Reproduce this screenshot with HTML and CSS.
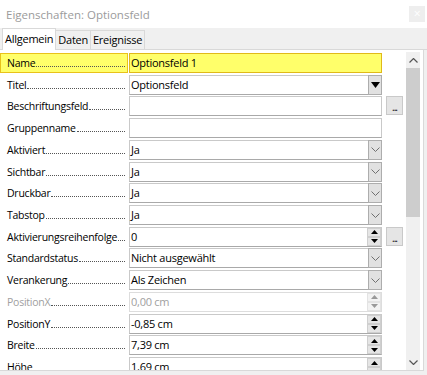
FILE: index.html
```html
<!DOCTYPE html>
<html lang="de">
<head>
<meta charset="utf-8">
<link rel="stylesheet" href="styles.css">
</head>
<body>
<div class="window">
  <div class="titlebar">
    <span class="title">Eigenschaften: Optionsfeld</span>
    <span class="close">×</span>
  </div>
  <div class="tabs">
    <div class="tab active">Allgemein</div>
    <div class="tab">Daten</div>
    <div class="tab">Ereignisse</div>
  </div>
  <div class="panel">
    <div class="rows">
      <div class="row">
        <div class="label hl"><span>Name</span><i class="dots"></i></div>
        <div class="field yellow"><span class="val">Optionsfeld 1</span></div>
      </div>
      <div class="row">
        <div class="label"><span>Titel</span><i class="dots"></i></div>
        <div class="field"><span class="val">Optionsfeld</span><span class="btn list"><svg width="9" height="6" viewBox="0 0 9 6"><path d="M0 0H9L4.5 6Z" fill="#000"/></svg></span></div>
      </div>
      <div class="row">
        <div class="label"><span>Beschriftungsfeld</span><i class="dots"></i></div>
        <div class="field"><span class="val"></span></div>
        <div class="more">...</div>
      </div>
      <div class="row">
        <div class="label"><span>Gruppenname</span><i class="dots"></i></div>
        <div class="field"><span class="val"></span></div>
      </div>
      <div class="row">
        <div class="label"><span>Aktiviert</span><i class="dots"></i></div>
        <div class="field"><span class="val">Ja</span><span class="btn"><svg width="9" height="5" viewBox="0 0 9 5"><path d="M0.5 0.5L4.5 4.5L8.5 0.5" fill="none" stroke="#707070"/></svg></span></div>
      </div>
      <div class="row">
        <div class="label"><span>Sichtbar</span><i class="dots"></i></div>
        <div class="field"><span class="val">Ja</span><span class="btn"><svg width="9" height="5" viewBox="0 0 9 5"><path d="M0.5 0.5L4.5 4.5L8.5 0.5" fill="none" stroke="#707070"/></svg></span></div>
      </div>
      <div class="row">
        <div class="label"><span>Druckbar</span><i class="dots"></i></div>
        <div class="field"><span class="val">Ja</span><span class="btn"><svg width="9" height="5" viewBox="0 0 9 5"><path d="M0.5 0.5L4.5 4.5L8.5 0.5" fill="none" stroke="#707070"/></svg></span></div>
      </div>
      <div class="row">
        <div class="label"><span>Tabstop</span><i class="dots"></i></div>
        <div class="field"><span class="val">Ja</span><span class="btn"><svg width="9" height="5" viewBox="0 0 9 5"><path d="M0.5 0.5L4.5 4.5L8.5 0.5" fill="none" stroke="#707070"/></svg></span></div>
      </div>
      <div class="row">
        <div class="label"><span>Aktivierungsreihenfolge</span><i class="dots"></i></div>
        <div class="field"><span class="val">0</span><span class="spin"><span class="up"><svg width="7" height="4" viewBox="0 0 7 4"><path d="M0 4H7L3.5 0Z" fill="#000"/></svg></span><span class="dn"><svg width="7" height="4" viewBox="0 0 7 4"><path d="M0 0H7L3.5 4Z" fill="#000"/></svg></span></span></div>
        <div class="more">...</div>
      </div>
      <div class="row">
        <div class="label"><span>Standardstatus</span><i class="dots"></i></div>
        <div class="field"><span class="val">Nicht ausgewählt</span><span class="btn"><svg width="9" height="5" viewBox="0 0 9 5"><path d="M0.5 0.5L4.5 4.5L8.5 0.5" fill="none" stroke="#707070"/></svg></span></div>
      </div>
      <div class="row">
        <div class="label"><span>Verankerung</span><i class="dots"></i></div>
        <div class="field"><span class="val">Als Zeichen</span><span class="btn"><svg width="9" height="5" viewBox="0 0 9 5"><path d="M0.5 0.5L4.5 4.5L8.5 0.5" fill="none" stroke="#707070"/></svg></span></div>
      </div>
      <div class="row disabled">
        <div class="label"><span>PositionX</span><i class="dots"></i></div>
        <div class="field"><span class="val">0,00 cm</span><span class="spin"><span class="up"><svg width="7" height="4" viewBox="0 0 7 4"><path d="M0 4H7L3.5 0Z" fill="#999"/></svg></span><span class="dn"><svg width="7" height="4" viewBox="0 0 7 4"><path d="M0 0H7L3.5 4Z" fill="#999"/></svg></span></span></div>
      </div>
      <div class="row">
        <div class="label"><span>PositionY</span><i class="dots"></i></div>
        <div class="field"><span class="val">-0,85 cm</span><span class="spin"><span class="up"><svg width="7" height="4" viewBox="0 0 7 4"><path d="M0 4H7L3.5 0Z" fill="#000"/></svg></span><span class="dn"><svg width="7" height="4" viewBox="0 0 7 4"><path d="M0 0H7L3.5 4Z" fill="#000"/></svg></span></span></div>
      </div>
      <div class="row">
        <div class="label"><span>Breite</span><i class="dots"></i></div>
        <div class="field"><span class="val">7,39 cm</span><span class="spin"><span class="up"><svg width="7" height="4" viewBox="0 0 7 4"><path d="M0 4H7L3.5 0Z" fill="#000"/></svg></span><span class="dn"><svg width="7" height="4" viewBox="0 0 7 4"><path d="M0 0H7L3.5 4Z" fill="#000"/></svg></span></span></div>
      </div>
      <div class="row">
        <div class="label"><span>Höhe</span><i class="dots"></i></div>
        <div class="field"><span class="val">1,69 cm</span><span class="spin"><span class="up"><svg width="7" height="4" viewBox="0 0 7 4"><path d="M0 4H7L3.5 0Z" fill="#000"/></svg></span><span class="dn"><svg width="7" height="4" viewBox="0 0 7 4"><path d="M0 0H7L3.5 4Z" fill="#000"/></svg></span></span></div>
      </div>
    </div>
    <div class="scrollbar">
      <div class="sb-arrow"><svg width="9" height="5" viewBox="0 0 9 5"><path d="M0.5 4.5L4.5 0.5L8.5 4.5" fill="none" stroke="#555" stroke-width="1.2"/></svg></div>
      <div class="sb-track"><div class="sb-thumb"></div></div>
      <div class="sb-arrow"><svg width="9" height="5" viewBox="0 0 9 5"><path d="M0.5 0.5L4.5 4.5L8.5 0.5" fill="none" stroke="#555" stroke-width="1.2"/></svg></div>
    </div>
  </div>
</div>
</body>
</html>
```
FILE: styles.css
```css
html, body {
  margin: 0;
  padding: 0;
}
body {
  width: 427px;
  height: 375px;
  overflow: hidden;
  background: #f0f0f0;
  font-family: "Open Sans", "Noto Sans", sans-serif;
  font-size: 10.5px;
  letter-spacing: -0.25px;
  color: #000;
}
.window {
  display: flex;
  flex-direction: column;
  height: 375px;
}
.titlebar {
  height: 28px;
  background: #fff;
  display: flex;
  align-items: center;
  justify-content: space-between;
  padding-left: 6px;
  box-sizing: border-box;
}
.title {
  color: #9b9b9b;
  font-size: 11.5px;
  letter-spacing: 0;
}
.close {
  width: 16px;
  height: 16px;
  margin-right: 2px;
  background: #eeeeee;
  color: #fff;
  font-size: 12px;
  line-height: 16px;
  text-align: center;
}
.tabs {
  height: 21px;
  display: flex;
  align-items: flex-end;
  padding-left: 2px;
  border-bottom: 1px solid #d9d9d9;
}
.tab {
  height: 19px;
  line-height: 18px;
  padding: 0 2px;
  font-size: 11px;
  border: 1px solid #d9d9d9;
  border-bottom: none;
  border-left: none;
  box-sizing: border-box;
}
.tab.active {
  line-height: 20px;
  background: #fff;
  border-left: 1px solid #d9d9d9;
  margin-bottom: -1px;
  height: 22px;
}
.panel {
  width: 424px;
  height: 321px;
  box-sizing: border-box;
  background: #fff;
  border-right: 1px solid #d9d9d9;
  border-bottom: 1px solid #d9d9d9;
  display: flex;
}
.rows {
  width: 406px;
  padding-top: 3px;
  display: flex;
  flex-direction: column;
  gap: 1.72px;
  overflow: hidden;
}
.row {
  flex: 0 0 20px;
  display: flex;
  align-items: stretch;
}
.label {
  width: 128px;
  box-sizing: border-box;
  padding-left: 6px;
  padding-right: 2px;
  display: flex;
  align-items: center;
  white-space: nowrap;
  margin-right: 1px;
  border: 1px solid transparent;
}
.label.hl {
  background: #ffff6a;
  border-color: #e9c21a;
}
.dots {
  flex: 1;
  align-self: flex-end;
  height: 0;
  border-bottom: 1px dotted #555;
  margin: 0 0 5px 1px;
}
.field {
  width: 253px;
  box-sizing: border-box;
  border: 1px solid #c9c9c9;
  border-bottom-color: #a9a9a9;
  display: flex;
  align-items: stretch;
  background: #fff;
}
.field.yellow {
  background: #ffff6a;
  border-color: #e0b91a;
}
.val {
  flex: 1;
  padding-left: 1px;
  line-height: 17px;
  font-size: 11px;
}
.btn {
  width: 14px;
  box-sizing: border-box;
  background: #e1e1e1;
  border: 1px solid #adadad;
  display: flex;
  align-items: center;
  justify-content: center;
  margin: -1px -1px -1px 0;
}
.spin {
  width: 14px;
  display: flex;
  flex-direction: column;
}
.spin .up, .spin .dn {
  flex: 1;
  background: #e5e5e5;
  border: 1px solid #cfcfcf;
  display: flex;
  align-items: center;
  justify-content: center;
}
.more {
  width: 17px;
  height: 19px;
  margin-left: 4px;
  box-sizing: border-box;
  background: #e5e5e5;
  border: 1px solid #c9c9c9;
  font-size: 10px;
  line-height: 20px;
  text-align: center;
  letter-spacing: -1px;
}
.disabled .label span, .disabled .val {
  color: #a0a0a0;
}
.disabled .field {
  border-color: #dddddd;
}
.disabled .spin .up, .disabled .spin .dn {
  background: #f2f2f2;
  border-color: #e3e3e3;
}
.scrollbar {
  width: 14px;
  background: #f0f0f0;
  display: flex;
  flex-direction: column;
  margin-top: 2px;
}
.sb-arrow {
  height: 16px;
  display: flex;
  align-items: center;
  justify-content: center;
}
.sb-track {
  flex: 1;
}
.sb-thumb {
  height: 149px;
  background: #cdcdcd;
}
```
